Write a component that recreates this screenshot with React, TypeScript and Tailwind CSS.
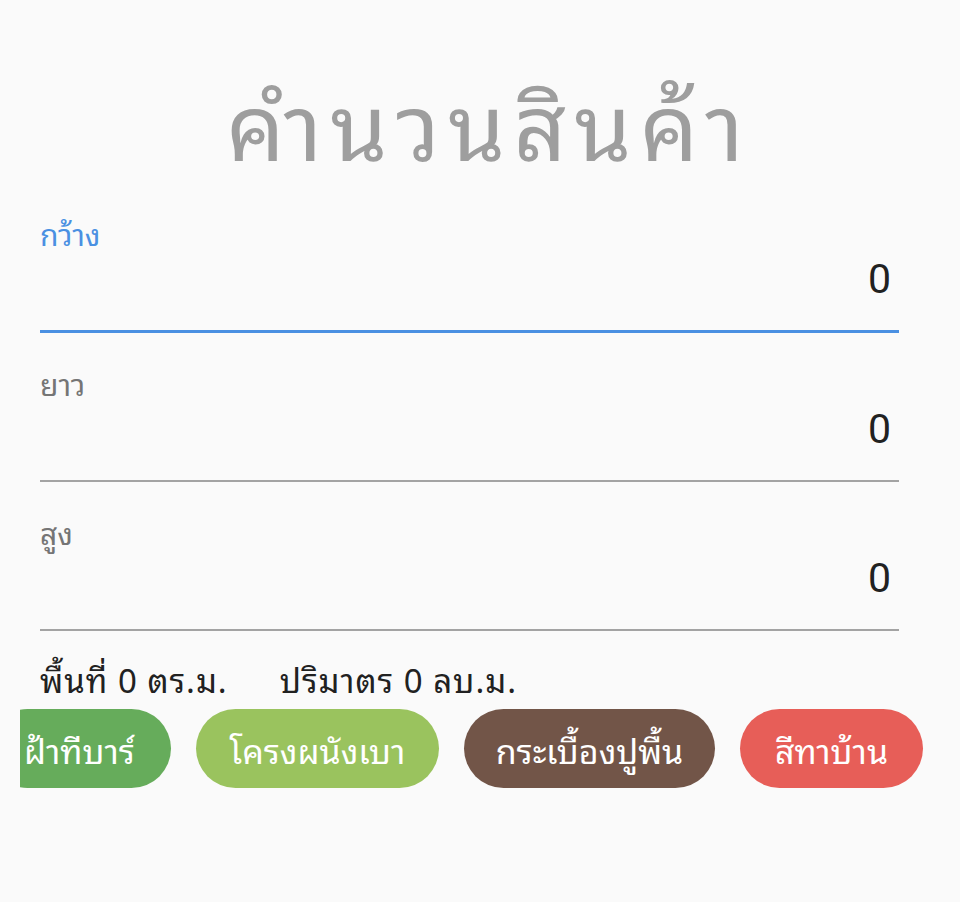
import React from "react";

const font = { fontFamily: '"Noto Sans Thai Looped", "Noto Sans", "Noto Sans Thai", sans-serif' };

function Field({ label, active, first }: { label: string; active?: boolean; first?: boolean }) {
  return (
    <div className={`flex flex-col ${first ? "" : "mt-[35px]"}`}>
      <div className={`text-[30px] leading-[30px] ${active ? "text-[#4a90e2]" : "text-[#757575]"}`}>{label}</div>
      <div
        className="mt-[8px] flex justify-end pr-[8px] text-[41px] leading-[46px] text-[#212121]"
        style={{ fontFamily: 'Roboto, "Noto Sans", sans-serif' }}
      >
        0
      </div>
      <div className={`mt-[28px] ${active ? "h-[3px] bg-[#4a90e2]" : "h-[2px] bg-[#a3a3a3]"}`} />
    </div>
  );
}

export default function App() {
  return (
    <div className="min-h-[902px] w-[960px] bg-[#fafafa]" style={font}>
      <div className="pt-[60px] pl-[18px] text-center text-[92px] leading-[120px] tracking-[8px] text-[#9e9e9e]">คำนวนสินค้า</div>
      <div className="mt-[38px] flex flex-col pl-[40px] pr-[61px]">
        <Field label="กว้าง" active first />
        <Field label="ยาว" />
        <Field label="สูง" />
      </div>
      <div className="mt-[28px] flex gap-[52px] pl-[40px] text-[33px] leading-[40px] tracking-[1px] text-[#212121]">
        <span>พื้นที่ 0 ตร.ม.</span>
        <span>ปริมาตร 0 ลบ.ม.</span>
      </div>
      <div className="ml-[20px] mt-[10px] overflow-hidden">
        <div className="flex gap-[25px] text-[34px] text-white">
          <div className="-ml-[32px] flex h-[79px] w-[183px] shrink-0 items-center justify-center rounded-full bg-[#66ac5b]">ฝ้าทีบาร์</div>
          <div className="flex h-[79px] w-[243px] shrink-0 items-center justify-center rounded-full bg-[#9ac35e]">โครงผนังเบา</div>
          <div className="flex h-[79px] w-[251px] shrink-0 items-center justify-center rounded-full bg-[#725548]">กระเบื้องปูพื้น</div>
          <div className="flex h-[79px] w-[183px] shrink-0 items-center justify-center rounded-full bg-[#e75e58]">สีทาบ้าน</div>
        </div>
      </div>
    </div>
  );
}
